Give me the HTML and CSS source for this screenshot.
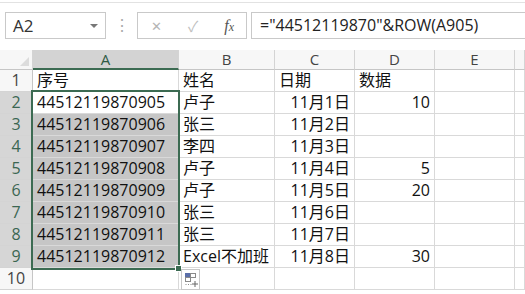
FILE: index.html
```html
<!DOCTYPE html>
<html lang="zh-CN">
<head>
    <meta charset="UTF-8">
    <title>Excel</title>
    <link rel="stylesheet" href="styles.css">
</head>
<body>

<div class="topline"></div>

<!-- Name box + formula bar -->
<div class="formula-row">
    <div class="name-box">
        <span>A2</span>
        <span class="caret"></span>
    </div>
    <div class="grip">⋮</div>
    <div class="fx-buttons">
        <span class="fx-x">✕</span>
        <span class="fx-ok">✓</span>
        <span class="fx-f"><i>f</i><i class="small">x</i></span>
    </div>
    <div class="formula-input">="44512119870"&amp;ROW(A905)</div>
</div>

<!-- Sheet -->
<div class="sheet">
    <div class="corner"><span class="tri"></span></div>
    <div class="col-head sel">A</div>
    <div class="col-head">B</div>
    <div class="col-head">C</div>
    <div class="col-head">D</div>
    <div class="col-head">E</div>
    <div class="col-head"></div>

    <div class="row-head">1</div>
    <div class="cell">序号</div>
    <div class="cell">姓名</div>
    <div class="cell">日期</div>
    <div class="cell">数据</div>
    <div class="cell"></div>
    <div class="cell"></div>

    <div class="row-head sel">2</div>
    <div class="cell">44512119870905</div>
    <div class="cell">卢子</div>
    <div class="cell num">11月1日</div>
    <div class="cell num">10</div>
    <div class="cell"></div>
    <div class="cell"></div>

    <div class="row-head sel">3</div>
    <div class="cell shade">44512119870906</div>
    <div class="cell">张三</div>
    <div class="cell num">11月2日</div>
    <div class="cell"></div>
    <div class="cell"></div>
    <div class="cell"></div>

    <div class="row-head sel">4</div>
    <div class="cell shade">44512119870907</div>
    <div class="cell">李四</div>
    <div class="cell num">11月3日</div>
    <div class="cell"></div>
    <div class="cell"></div>
    <div class="cell"></div>

    <div class="row-head sel">5</div>
    <div class="cell shade">44512119870908</div>
    <div class="cell">卢子</div>
    <div class="cell num">11月4日</div>
    <div class="cell num">5</div>
    <div class="cell"></div>
    <div class="cell"></div>

    <div class="row-head sel">6</div>
    <div class="cell shade">44512119870909</div>
    <div class="cell">卢子</div>
    <div class="cell num">11月5日</div>
    <div class="cell num">20</div>
    <div class="cell"></div>
    <div class="cell"></div>

    <div class="row-head sel">7</div>
    <div class="cell shade">44512119870910</div>
    <div class="cell">张三</div>
    <div class="cell num">11月6日</div>
    <div class="cell"></div>
    <div class="cell"></div>
    <div class="cell"></div>

    <div class="row-head sel">8</div>
    <div class="cell shade">44512119870911</div>
    <div class="cell">张三</div>
    <div class="cell num">11月7日</div>
    <div class="cell"></div>
    <div class="cell"></div>
    <div class="cell"></div>

    <div class="row-head sel">9</div>
    <div class="cell shade">44512119870912</div>
    <div class="cell">Excel不加班</div>
    <div class="cell num">11月8日</div>
    <div class="cell num">30</div>
    <div class="cell"></div>
    <div class="cell"></div>

    <div class="row-head">10</div>
    <div class="cell"></div>
    <div class="cell"></div>
    <div class="cell"></div>
    <div class="cell"></div>
    <div class="cell"></div>
    <div class="cell"></div>

    <!-- selection overlay -->
    <div class="selection"></div>
    <div class="fill-handle"></div>
    <div class="quick-analysis">
        <svg width="17" height="19" viewBox="0 0 17 19">
            <rect x="3" y="3" width="5" height="4" fill="#5b6fa8"/>
            <rect x="8.5" y="3.5" width="5" height="4" fill="none" stroke="#8a8a8a"/>
            <rect x="3.5" y="7.5" width="5" height="4" fill="none" stroke="#8a8a8a"/>
            <path d="M3.5 14.5h1M6 14.5h1M8.5 14.5h1" stroke="#8a8a8a"/>
            <path d="M13 11v6M10 14h6" stroke="#666" stroke-width="1"/>
        </svg>
    </div>
</div>

</body>
</html>
```

FILE: styles.css
```css
body {
    margin: 0;
    padding: 0;
    background-color: #fff;
    font-family: "Open Sans", "Noto Sans CJK SC", sans-serif;
    color: #111;
    overflow: hidden;
}

.topline {
    height: 2px;
    border-bottom: 1px solid #e2e2e2;
}

/* formula bar */
.formula-row {
    display: flex;
    align-items: stretch;
    height: 27px;
    margin-top: 9px;
    padding-left: 5px;
}

.name-box {
    width: 101px;
    box-sizing: border-box;
    border: 1px solid #c9c9c9;
    display: flex;
    align-items: center;
    justify-content: space-between;
    padding: 0 7px 0 7px;
    font-size: 17px;
    color: #333;
}

.caret {
    width: 0;
    height: 0;
    border-left: 4px solid transparent;
    border-right: 4px solid transparent;
    border-top: 4px solid #777;
}

.grip {
    width: 31px;
    text-align: center;
    color: #aaa;
    font-size: 16px;
    line-height: 27px;
}

.fx-buttons {
    width: 110px;
    box-sizing: border-box;
    border: 1px solid #c9c9c9;
    display: flex;
    align-items: center;
    padding: 0 12px 0 13px;
    justify-content: space-between;
}

.fx-x {
    color: #b5b5b5;
    font-size: 13px;
}

.fx-ok {
    color: #c0c0c0;
    font-size: 15px;
}

.fx-f {
    font-family: "Liberation Serif", serif;
    color: #555;
    font-size: 16px;
}

.fx-f .small {
    font-size: 12px;
}

.formula-input {
    flex: 1;
    margin-left: 4px;
    border-top: 1px solid #c9c9c9;
    border-bottom: 1px solid #c9c9c9;
    border-left: 1px solid #c9c9c9;
    padding-left: 8px;
    font-size: 16px;
    line-height: 25px;
    color: #222;
}

/* sheet */
.sheet {
    position: relative;
    margin-top: 11px;
    display: grid;
    grid-template-columns: 33px 146px 96px 80px 80px 80px 10px;
    grid-template-rows: 20px repeat(10, 22px);
}

.sheet > div {
    box-sizing: border-box;
}

.corner {
    background-color: #f7f7f7;
    border-right: 1px solid #d4d4d4;
    border-bottom: 1px solid #c6c6c6;
    position: relative;
}

.tri {
    position: absolute;
    right: 3px;
    bottom: 3px;
    width: 0;
    height: 0;
    border-left: 9px solid transparent;
    border-bottom: 9px solid #dcdcdc;
}

.col-head {
    background-color: #f7f7f7;
    border-right: 1px solid #d4d4d4;
    border-bottom: 1px solid #c6c6c6;
    text-align: center;
    font-size: 15px;
    line-height: 19px;
    color: #444;
}

.col-head.sel {
    background-color: #d3d3d3;
    border-bottom: 2px solid #3c6b52;
    color: #2f5a45;
}

.row-head {
    background-color: #f7f7f7;
    border-right: 1px solid #c6c6c6;
    border-bottom: 1px solid #d4d4d4;
    text-align: center;
    font-size: 16px;
    line-height: 21px;
    color: #444;
}

.row-head.sel {
    background-color: #d6d6d6;
    color: #3b6652;
}

.cell {
    border-right: 1px solid #d9d9d9;
    border-bottom: 1px solid #d9d9d9;
    font-size: 16px;
    line-height: 21px;
    padding: 0 4px;
    white-space: nowrap;
    overflow: visible;
    color: #111;
}

.cell.num {
    text-align: right;
}

.cell.shade {
    background-color: #c6c6c6;
}

.selection {
    position: absolute;
    left: 31px;
    top: 40px;
    width: 149px;
    height: 180px;
    border: 2px solid #3c6b52;
    pointer-events: none;
}

.fill-handle {
    position: absolute;
    left: 175px;
    top: 215px;
    width: 7px;
    height: 7px;
    background-color: #3c6b52;
    border: 1px solid #fff;
}

.quick-analysis {
    position: absolute;
    left: 181px;
    top: 219px;
    width: 19px;
    height: 21px;
    background-color: #fff;
    border: 1px solid #c8c8c8;
    display: flex;
    align-items: center;
    justify-content: center;
}
```
